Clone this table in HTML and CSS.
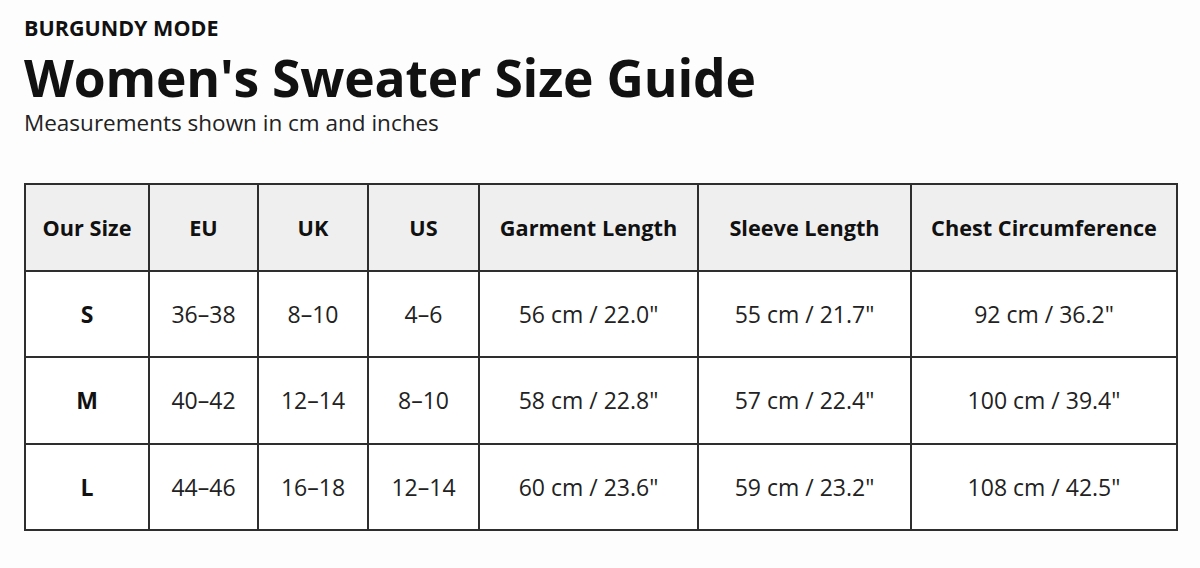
FILE: index.html
```html
<!DOCTYPE html>
<html>
<head>
<meta charset="utf-8">
<link rel="stylesheet" href="styles.css">
</head>
<body>
<div class="page">
  <div class="brand">BURGUNDY MODE</div>
  <h1 class="title">Women's Sweater Size Guide</h1>
  <div class="subtitle">Measurements shown in cm and inches</div>
  <table class="sizes">
    <colgroup>
      <col class="c1"><col class="c2"><col class="c3"><col class="c4"><col class="c5"><col class="c6"><col class="c7">
    </colgroup>
    <thead>
      <tr><th>Our Size</th><th>EU</th><th>UK</th><th>US</th><th>Garment Length</th><th>Sleeve Length</th><th>Chest Circumference</th></tr>
    </thead>
    <tbody>
      <tr><td class="sz">S</td><td>36–38</td><td>8–10</td><td>4–6</td><td>56 cm / 22.0"</td><td>55 cm / 21.7"</td><td>92 cm / 36.2"</td></tr>
      <tr><td class="sz">M</td><td>40–42</td><td>12–14</td><td>8–10</td><td>58 cm / 22.8"</td><td>57 cm / 22.4"</td><td>100 cm / 39.4"</td></tr>
      <tr><td class="sz">L</td><td>44–46</td><td>16–18</td><td>12–14</td><td>60 cm / 23.6"</td><td>59 cm / 23.2"</td><td>108 cm / 42.5"</td></tr>
    </tbody>
  </table>
</div>
</body>
</html>
```
FILE: styles.css
```css
html, body {
  margin: 0;
  padding: 0;
  background: #fdfdfd;
}
body {
  font-family: "Open Sans", "Liberation Sans", sans-serif;
  color: #111;
}
.page {
  padding: 14px 24px 0 24px;
}
.brand {
  font-size: 21.5px;
  font-weight: 700;
  line-height: 28px;
}
.title {
  margin: 2px 0 0 0;
  font-size: 51.6px;
  font-weight: 700;
  line-height: 66px;
  letter-spacing: -0.2px;
}
.subtitle {
  font-size: 22.5px;
  line-height: 26px;
  color: #222;
}
.sizes {
  margin-top: 47px;
  border-collapse: collapse;
  width: 1152px;
  table-layout: fixed;
}
.c1 { width: 124px; }
.c2 { width: 109px; }
.c3 { width: 110px; }
.c4 { width: 111px; }
.c5 { width: 219px; }
.c6 { width: 213px; }
.c7 { width: 266px; }
.sizes th, .sizes td {
  border: 2px solid #2e2e2e;
  text-align: center;
  height: 84.5px;
  padding: 0;
}
.sizes th {
  background: #efefef;
  font-size: 21.7px;
  font-weight: 700;
  color: #111;
}
.sizes td {
  font-size: 23px;
  color: #222;
  background: #fff;
}
.sizes td.sz {
  font-weight: 700;
  color: #111;
}
```
